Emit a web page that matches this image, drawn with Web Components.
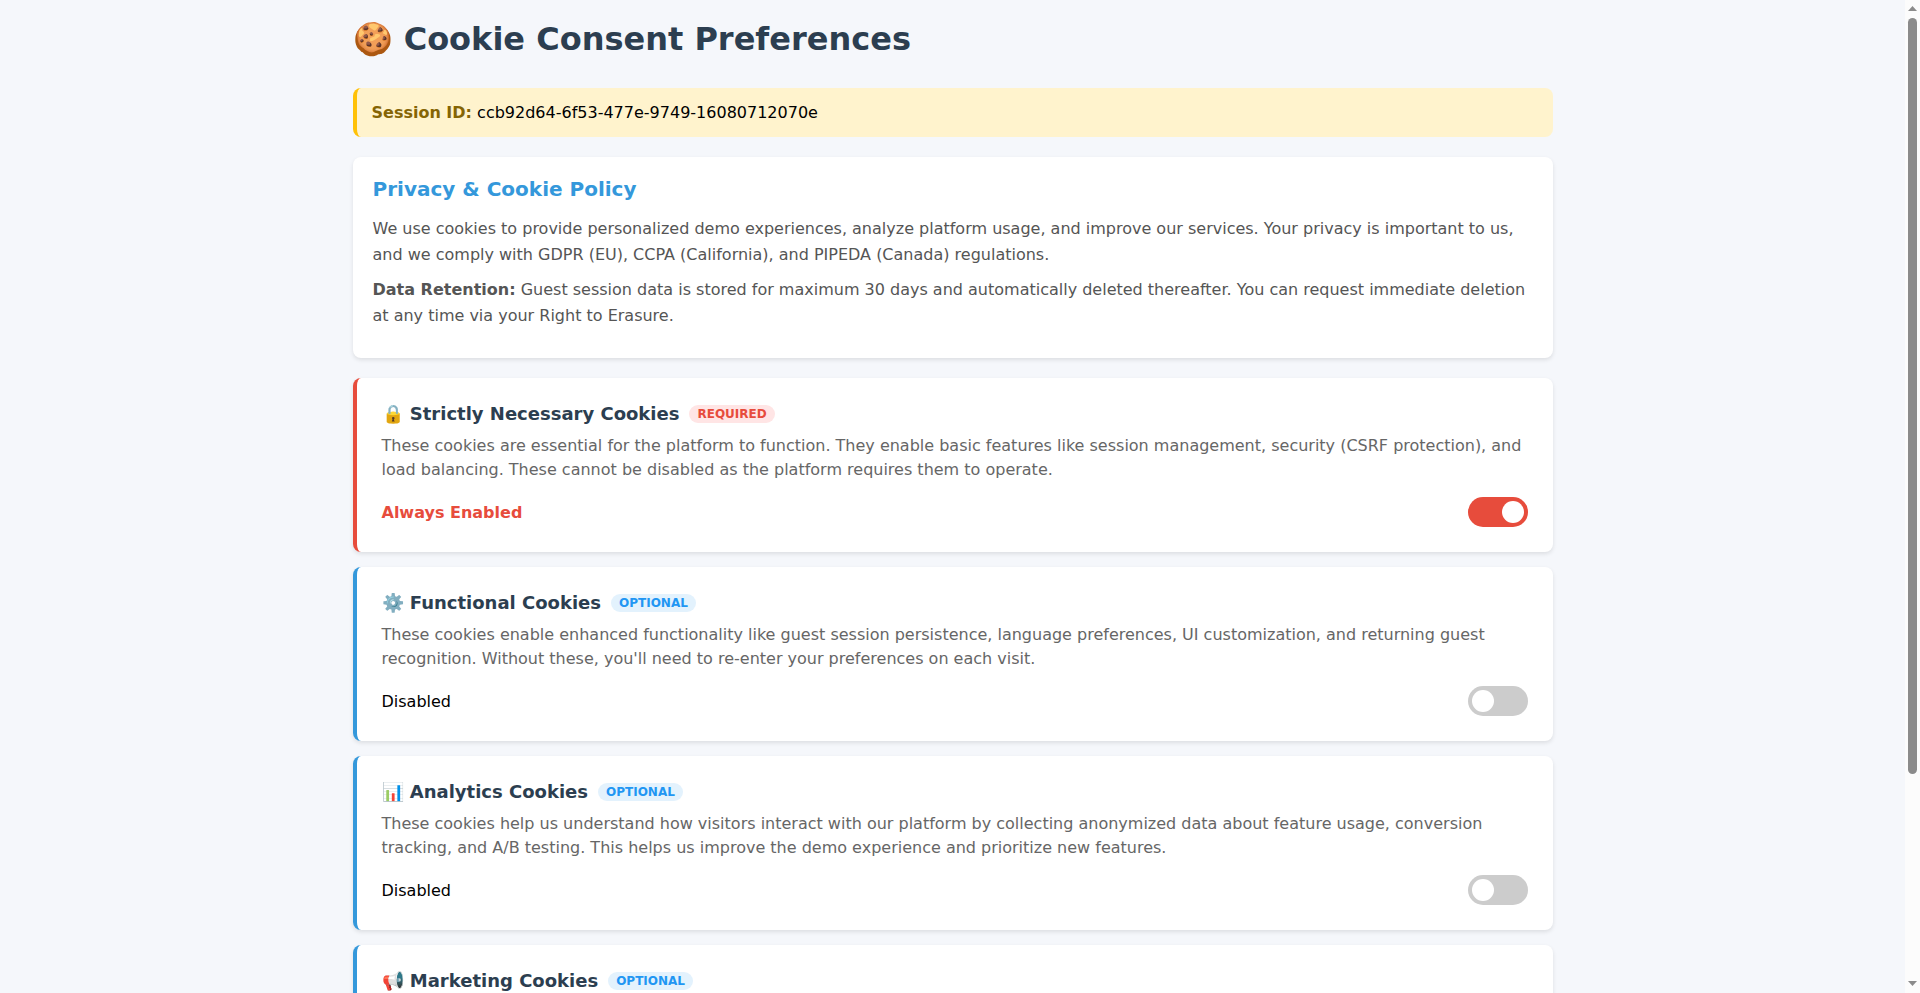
<!DOCTYPE html>
<html lang="en">
<head>
<meta charset="utf-8">
<meta name="viewport" content="width=device-width, initial-scale=1">
<title>Cookie Consent Preferences</title>
<style>
  body { margin: 0; background: #f5f7fb; color: #000; font: 16px "DejaVu Sans", sans-serif; }
</style>
</head>
<body>
<consent-page>
  <session-banner label="Session ID:">ccb92d64-6f53-477e-9749-16080712070e</session-banner>
  <policy-card heading="Privacy &amp; Cookie Policy">
    <p>We use cookies to provide personalized demo experiences, analyze platform usage, and improve our services. Your privacy is important to us, and we comply with GDPR (EU), CCPA (California), and PIPEDA (Canada) regulations.</p>
    <p><strong>Data Retention:</strong> Guest session data is stored for maximum 30 days and automatically deleted thereafter. You can request immediate deletion at any time via your Right to Erasure.</p>
  </policy-card>
  <cookie-category heading="🔒 Strictly Necessary Cookies" status="Always Enabled" required>These cookies are essential for the platform to function. They enable basic features like session management, security (CSRF protection), and load balancing. These cannot be disabled as the platform requires them to operate.</cookie-category>
  <cookie-category heading="⚙️ Functional Cookies" status="Disabled">These cookies enable enhanced functionality like guest session persistence, language preferences, UI customization, and returning guest recognition. Without these, you'll need to re-enter your preferences on each visit.</cookie-category>
  <cookie-category heading="📊 Analytics Cookies" status="Disabled">These cookies help us understand how visitors interact with our platform by collecting anonymized data about feature usage, conversion tracking, and A/B testing. This helps us improve the demo experience and prioritize new features.</cookie-category>
  <cookie-category heading="📢 Marketing Cookies"></cookie-category>
</consent-page>

<template id="consent-page">
  <style>
    :host { display: flex; height: 100vh; }
    main { flex: 1; min-width: 0; overflow-y: auto; scrollbar-width: none; }
    .inner { max-width: 1200px; margin: 0 auto; padding: 20px 0; }
    h1 { margin: 0 0 30px; font-size: 32px; line-height: 38px; color: #2c3e50; }
  </style>
  <main><div class="inner"><h1>🍪 Cookie Consent Preferences</h1><slot></slot></div></main>
  <scroll-rail aria-hidden="true"></scroll-rail>
</template>

<template id="scroll-rail">
  <style>
    :host { display: flex; flex-direction: column; align-items: center; justify-content: space-between; box-sizing: border-box; width: 15px; padding: 6px 0; background: #fcfcfc; }
    svg { display: block; width: 9px; height: 6px; fill: #8b8b8b; }
    .track { flex: 1; margin: 6px 0; }
    .thumb { width: 9px; height: 79%; border-radius: 5px; background: #8b8b8b; }
  </style>
  <svg viewBox="0 0 9 6"><path d="M0 5L4.500 0L9 5Z"/></svg>
  <div class="track"><div class="thumb"></div></div>
  <svg viewBox="0 0 9 6"><path d="M0 0L4.500 5L9 0Z"/></svg>
</template>

<template id="session-banner">
  <style>
    :host { display: block; margin-bottom: 20px; padding: 15px; border-left: 4px solid #ffc107; border-radius: 8px; background: #fff3cd; line-height: 19px; }
    strong { color: #856404; }
  </style>
  <strong></strong> <slot></slot>
</template>

<template id="policy-card">
  <style>
    :host { display: block; margin-bottom: 20px; padding: 20px 20px 29px; border-radius: 8px; background: #fff; box-shadow: 0 2px 4px rgba(0,0,0,.1); }
    h2 { margin: 0 0 15px; font-size: 20px; line-height: 24px; color: #3498db; }
    ::slotted(p) { margin: 0; line-height: 26px; color: #555; }
    ::slotted(p:not(:first-child)) { margin-top: 9px; }
  </style>
  <h2></h2><slot></slot>
</template>

<template id="cookie-category">
  <style>
    :host { display: block; margin-bottom: 15px; padding: 25px; border-left: 4px solid #3498db; border-radius: 8px; background: #fff; box-shadow: 0 2px 4px rgba(0,0,0,.1); }
    :host([required]) { border-left-color: #e74c3c; }
    header { display: flex; align-items: center; gap: 10px; margin-bottom: 10px; }
    h3 { margin: 0; font-size: 18px; line-height: 21px; color: #2c3e50; }
    .badge { padding: 2px 8px; border-radius: 12px; background: #e3f2fd; color: #2196f3; font-size: 12px; font-weight: bold; line-height: 14px; }
    :host([required]) .badge { background: #ffe5e5; color: #e74c3c; }
    p { margin: 0 0 15px; line-height: 24px; color: #666; }
    .row { display: flex; justify-content: space-between; align-items: center; }
    .row[hidden] { display: none; }
    :host([required]) label { color: #e74c3c; font-weight: bold; }
    input { appearance: none; display: flex; box-sizing: border-box; width: 60px; height: 30px; margin: 0; padding: 4px; border-radius: 15px; background: #ccc; cursor: pointer; }
    input::before { content: ""; width: 22px; height: 22px; border-radius: 50%; background: #fff; }
    input:checked { justify-content: flex-end; background: #3498db; }
    :host([required]) input { background: #e74c3c; cursor: not-allowed; }
  </style>
  <header><h3></h3><span class="badge"></span></header>
  <p><slot></slot></p>
  <div class="row"><label for="toggle"></label><input type="checkbox" id="toggle"></div>
</template>

<script>
  class Base extends HTMLElement {
    constructor() {
      super();
      this.attachShadow({ mode: "open" })
        .append(document.getElementById(this.localName).content.cloneNode(true));
    }
    find(selector) { return this.shadowRoot.querySelector(selector); }
  }
  customElements.define("scroll-rail", class extends Base {});
  customElements.define("consent-page", class extends Base {});
  customElements.define("session-banner", class extends Base {
    connectedCallback() { this.find("strong").textContent = this.getAttribute("label"); }
  });
  customElements.define("policy-card", class extends Base {
    connectedCallback() { this.find("h2").textContent = this.getAttribute("heading"); }
  });
  customElements.define("cookie-category", class extends Base {
    connectedCallback() {
      const required = this.hasAttribute("required");
      this.find("h3").textContent = this.getAttribute("heading");
      this.find(".badge").textContent = required ? "REQUIRED" : "OPTIONAL";
      if (!this.hasAttribute("status")) {
        this.find(".row").hidden = true;
        return;
      }
      const label = this.find("label");
      const input = this.find("input");
      label.textContent = this.getAttribute("status");
      input.checked = input.disabled = required;
      input.addEventListener("change", () => {
        label.textContent = input.checked ? "Enabled" : "Disabled";
      });
    }
  });
</script>
</body>
</html>
